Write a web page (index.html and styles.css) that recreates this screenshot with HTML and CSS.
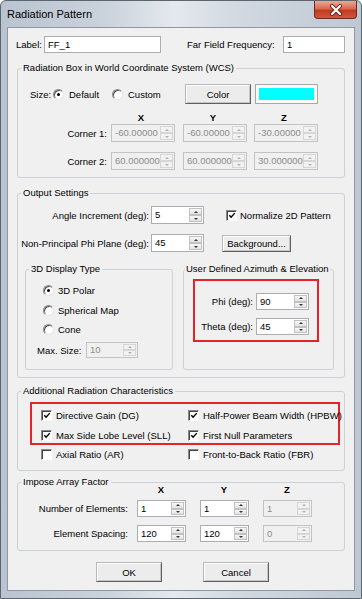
FILE: index.html
```html
<!DOCTYPE html>
<html lang="en">
<head>
    <meta charset="UTF-8">
    <meta name="viewport" content="width=device-width, initial-scale=1.0">
    <title>Radiation Pattern</title>
    <link rel="stylesheet" href="styles.css">
</head>
<body>
    <div class="window">
        <div class="titlebar">
            <span class="title">Radiation Pattern</span>
            <div class="close">
                <svg width="14" height="12" viewBox="0 0 14 12">
                    <path d="M3 2 L11 10 M11 2 L3 10" stroke="#6b2416" stroke-width="4" stroke-linecap="round"/>
                    <path d="M3 2 L11 10 M11 2 L3 10" stroke="#fff" stroke-width="2.2" stroke-linecap="round"/>
                </svg>
            </div>
        </div>
        <div class="client">
            <div class="row-top">
                <span class="lbl-label">Label:</span>
                <div class="edit w-label">FF_1</div>
                <span class="lbl-freq">Far Field Frequency:</span>
                <div class="edit w-freq">1</div>
            </div>

            <fieldset class="group g-box">
                <legend>Radiation Box in World Coordinate System (WCS)</legend>
                <div class="size-row">
                    <span class="size-lbl">Size:</span>
                    <span class="opt w-default"><i class="radio on"></i>Default</span>
                    <span class="opt w-custom"><i class="radio"></i>Custom</span>
                    <button class="btn btn-color">Color</button>
                    <div class="swatch"><div class="swatch-fill"></div></div>
                </div>
                <div class="hdr cols-box">
                    <span></span><span class="h">X</span><span class="h">Y</span><span class="h">Z</span>
                </div>
                <div class="grid cols-box">
                    <span class="rlbl">Corner 1:</span>
                    <div class="spin off w64"><span class="val">-60.00000</span><span class="arrows"><i class="up"></i><i class="down"></i></span></div>
                    <div class="spin off w64"><span class="val">-60.00000</span><span class="arrows"><i class="up"></i><i class="down"></i></span></div>
                    <div class="spin off w64"><span class="val">-30.00000</span><span class="arrows"><i class="up"></i><i class="down"></i></span></div>
                    <span class="rlbl">Corner 2:</span>
                    <div class="spin off w64"><span class="val">60.000000</span><span class="arrows"><i class="up"></i><i class="down"></i></span></div>
                    <div class="spin off w64"><span class="val">60.000000</span><span class="arrows"><i class="up"></i><i class="down"></i></span></div>
                    <div class="spin off w64"><span class="val">30.000000</span><span class="arrows"><i class="up"></i><i class="down"></i></span></div>
                </div>
            </fieldset>

            <fieldset class="group g-out">
                <legend>Output Settings</legend>
                <div class="out-row first">
                    <span class="out-lbl">Angle Increment (deg):</span>
                    <div class="spin w53"><span class="val">5</span><span class="arrows"><i class="up"></i><i class="down"></i></span></div>
                    <span class="opt chk-opt"><i class="check"><svg width="9" height="9" viewBox="0 0 9 9"><path d="M1.5 4.2 L3.5 6.4 L7.6 1.8" fill="none" stroke="#000" stroke-width="1.6"/></svg></i>Normalize 2D Pattern</span>
                </div>
                <div class="out-row">
                    <span class="out-lbl">Non-Principal Phi Plane (deg):</span>
                    <div class="spin w53"><span class="val">45</span><span class="arrows"><i class="up"></i><i class="down"></i></span></div>
                    <button class="btn btn-bg">Background...</button>
                </div>
                <div class="inner-row">
                    <fieldset class="group g-3d">
                        <legend>3D Display Type</legend>
                        <div class="opt r-row r1"><i class="radio on"></i>3D Polar</div>
                        <div class="opt r-row r2"><i class="radio"></i>Spherical Map</div>
                        <div class="opt r-row r3"><i class="radio"></i>Cone</div>
                        <div class="max-row">
                            <span class="max-lbl">Max. Size:</span>
                            <div class="spin off w52 h16"><span class="val">10</span><span class="arrows"><i class="up"></i><i class="down"></i></span></div>
                        </div>
                    </fieldset>
                    <fieldset class="group g-user">
                        <legend>User Defined Azimuth &amp; Elevation</legend>
                        <div class="redbox red-user">
                            <div class="ue-grid">
                                <span class="rlbl">Phi (deg):</span>
                                <div class="spin w53 h17"><span class="val">90</span><span class="arrows"><i class="up"></i><i class="down"></i></span></div>
                                <span class="rlbl">Theta (deg):</span>
                                <div class="spin w53 h17"><span class="val">45</span><span class="arrows"><i class="up"></i><i class="down"></i></span></div>
                            </div>
                        </div>
                    </fieldset>
                </div>
            </fieldset>

            <fieldset class="group g-add">
                <legend>Additional Radiation Characteristics</legend>
                <div class="redbox red-add">
                    <div class="chk-grid">
                        <span class="opt"><i class="check"><svg width="9" height="9" viewBox="0 0 9 9"><path d="M1.5 4.2 L3.5 6.4 L7.6 1.8" fill="none" stroke="#000" stroke-width="1.6"/></svg></i>Directive Gain (DG)</span>
                        <span class="opt"><i class="check"><svg width="9" height="9" viewBox="0 0 9 9"><path d="M1.5 4.2 L3.5 6.4 L7.6 1.8" fill="none" stroke="#000" stroke-width="1.6"/></svg></i>Half-Power Beam Width (HPBW)</span>
                        <span class="opt"><i class="check"><svg width="9" height="9" viewBox="0 0 9 9"><path d="M1.5 4.2 L3.5 6.4 L7.6 1.8" fill="none" stroke="#000" stroke-width="1.6"/></svg></i>Max Side Lobe Level (SLL)</span>
                        <span class="opt"><i class="check"><svg width="9" height="9" viewBox="0 0 9 9"><path d="M1.5 4.2 L3.5 6.4 L7.6 1.8" fill="none" stroke="#000" stroke-width="1.6"/></svg></i>First Null Parameters</span>
                    </div>
                </div>
                <div class="chk-grid plain">
                    <span class="opt"><i class="check"></i>Axial Ratio (AR)</span>
                    <span class="opt"><i class="check"></i>Front-to-Back Ratio (FBR)</span>
                </div>
            </fieldset>

            <fieldset class="group g-imp">
                <legend>Impose Array Factor</legend>
                <div class="hdr cols-imp">
                    <span></span><span class="h">X</span><span class="h">Y</span><span class="h">Z</span>
                </div>
                <div class="grid cols-imp imp-grid">
                    <span class="rlbl">Number of Elements:</span>
                    <div class="spin w49 h17"><span class="val">1</span><span class="arrows"><i class="up"></i><i class="down"></i></span></div>
                    <div class="spin w49 h17"><span class="val">1</span><span class="arrows"><i class="up"></i><i class="down"></i></span></div>
                    <div class="spin off w49 h17"><span class="val">1</span><span class="arrows"><i class="up"></i><i class="down"></i></span></div>
                    <span class="rlbl">Element Spacing:</span>
                    <div class="spin w49 h17"><span class="val">120</span><span class="arrows"><i class="up"></i><i class="down"></i></span></div>
                    <div class="spin w49 h17"><span class="val">120</span><span class="arrows"><i class="up"></i><i class="down"></i></span></div>
                    <div class="spin off w49 h17"><span class="val">0</span><span class="arrows"><i class="up"></i><i class="down"></i></span></div>
                </div>
            </fieldset>

            <div class="btn-row">
                <button class="btn btn-main">OK</button>
                <button class="btn btn-main">Cancel</button>
            </div>
        </div>
    </div>
</body>
</html>
```
FILE: styles.css
```css
* { box-sizing: border-box; }
body {
    margin: 0;
    font-family: "Liberation Sans", Arial, sans-serif;
    font-size: 9.5px;
    color: #000;
    background: #fff;
}
.window {
    width: 362px;
    height: 599px;
    border: 1px solid #5d6670;
    border-radius: 6px 6px 0 0;
    background: linear-gradient(90deg, #b9c4d0 0%, #cbd3dc 30%, #e4e9ee 48%, #d2d9e1 65%, #bec8d3 100%);
    padding: 0 6px 7px;
    display: flex;
    flex-direction: column;
}
.titlebar {
    height: 26px;
    display: flex;
    align-items: flex-start;
}
.title {
    font-size: 11px;
    line-height: 26px;
}
.close {
    margin-left: auto;
    margin-right: -2px;
    width: 43px;
    height: 18px;
    border: 1px solid #6e2a1d;
    border-top: none;
    border-radius: 0 0 4px 4px;
    background: linear-gradient(#e9a996 0%, #d86c52 45%, #c2391f 55%, #d0583c 100%);
    display: flex;
    align-items: center;
    justify-content: center;
}
.client {
    flex: 1;
    border: 1px solid #8c98a5;
    background: #f0f0f0;
    padding: 8px 9px 0 9px;
}

/* top row */
.row-top {
    display: flex;
    align-items: center;
    height: 17px;
    margin-left: -1px;
}
.lbl-label { width: 28px; }
.lbl-freq { width: 96px; margin-left: 26px; }
.edit {
    height: 17px;
    border: 1px solid #abadb3;
    background: #fff;
    padding-left: 3px;
    line-height: 15px;
}
.w-label { width: 117px; }
.w-freq { width: 62px; }

/* group boxes */
.group {
    margin: 0;
    padding: 0;
    border: 1px solid #cdd1d5;
    border-radius: 3px;
    min-width: 0;
}
.group legend {
    margin-left: 3px;
    padding: 0 2px;
    line-height: 12px;
    white-space: nowrap;
}
.g-box { margin-top: 9px; padding-bottom: 7px; }
.g-out { margin-top: 9px; padding-bottom: 7px; }
.g-add { margin-top: 7px; padding-bottom: 8px; }
.g-imp { margin-top: 5px; padding-bottom: 8px; }

.size-row {
    display: flex;
    align-items: center;
    height: 20px;
    margin-top: 10px;
    padding-left: 12px;
}
.size-lbl { width: 23px; }
.w-default { width: 59px; }
.w-custom { width: 73px; }

.opt {
    display: flex;
    align-items: center;
    gap: 5px;
    white-space: nowrap;
}
.radio {
    display: flex;
    align-items: center;
    justify-content: center;
    width: 11px;
    height: 11px;
    flex: none;
    border-radius: 50%;
    border: 1px solid;
    border-color: #8a8a8a #e6e6e6 #e6e6e6 #8a8a8a;
    box-shadow: inset 1px 1px 0 #555;
    background: #fff;
}
.radio.on::after {
    content: "";
    width: 3px;
    height: 3px;
    border-radius: 50%;
    background: #000;
}
.check {
    display: flex;
    align-items: center;
    justify-content: center;
    width: 11px;
    height: 11px;
    flex: none;
    border: 1px solid;
    border-color: #8a8a8a #fff #fff #8a8a8a;
    box-shadow: inset 1px 1px 0 #444;
    background: #fff;
}
.check svg { margin: 1px 0 0 1px; }

.btn {
    font: inherit;
    color: #000;
    padding: 0;
    border: 1px solid;
    border-color: #b8b8b8 #5f5f5f #5f5f5f #b8b8b8;
    box-shadow: inset 1px 1px 0 #fff, inset -1px -1px 0 #c6c6c6;
    background: #ececec;
}
.btn-color { width: 66px; height: 20px; }
.btn-bg { width: 69px; height: 17px; margin-left: 18px; }
.btn-main { width: 66px; height: 20px; }
.swatch {
    width: 63px;
    height: 20px;
    margin-left: 4px;
    border: 1px solid #a8a8a8;
    padding: 3px;
    background: #fafafa;
}
.swatch-fill { height: 100%; background: #00ffff; }

/* coordinate grids */
.cols-box { grid-template-columns: 93px 72px 71px 64px; }
.cols-imp { grid-template-columns: 119px 63px 63px 49px; }
.hdr {
    display: grid;
    height: 12px;
    line-height: 12px;
    font-weight: bold;
    margin-top: 8px;
}
.cols-box .h { width: 60px; text-align: center; }
.cols-imp .h { width: 48px; text-align: center; }
.grid {
    display: grid;
    grid-auto-rows: 18px;
    row-gap: 10px;
    align-items: center;
}
.rlbl { text-align: right; padding-right: 4px; white-space: nowrap; }

.spin {
    display: flex;
    height: 18px;
    flex: none;
    border: 1px solid #abadb3;
    background: #fff;
}
.spin .val {
    flex: 1;
    min-width: 0;
    overflow: hidden;
    white-space: nowrap;
    padding-left: 3px;
    line-height: 16px;
}
.arrows {
    width: 14px;
    display: flex;
    flex-direction: column;
    padding: 1px 1px 1px 0;
}
.arrows i {
    flex: 1;
    display: flex;
    align-items: center;
    justify-content: center;
    border: 1px solid #c2c2c2;
    background: linear-gradient(#f8f8f8, #e2e2e2);
}
.arrows .up::after {
    content: "";
    border: 2px solid transparent;
    border-top: none;
    border-bottom: 2px solid #333;
}
.arrows .down::after {
    content: "";
    border: 2px solid transparent;
    border-bottom: none;
    border-top: 2px solid #333;
}
.spin.off { background: #f0f0f0; border-color: #c3c3c3; color: #8a8a8a; }
.spin.off .arrows i { border-color: #d6d6d6; background: #f2f2f2; }
.spin.off .arrows .up::after { border-bottom-color: #b0b0b0; }
.spin.off .arrows .down::after { border-top-color: #b0b0b0; }
.w64 { width: 64px; }
.w53 { width: 53px; }
.w52 { width: 52px; }
.w49 { width: 49px; }
.h16 { height: 16px; }
.h16 .val { line-height: 14px; }
.h17 { height: 17px; }
.h17 .val { line-height: 15px; }

/* output settings */
.out-row {
    display: flex;
    align-items: center;
    height: 18px;
    margin-top: 10px;
}
.out-row.first { margin-top: 7px; }
.out-lbl {
    width: 133px;
    flex: none;
    text-align: right;
    padding-right: 2px;
    white-space: nowrap;
}
.chk-opt { margin-left: 22px; gap: 3px; }
.inner-row {
    display: flex;
    gap: 10px;
    margin: 11px 0 0 7px;
}
.g-3d { width: 148px; height: 107px; }
.g-user { width: 151px; height: 107px; }
.g-user legend { margin-left: 1px; padding: 0 1px; }
.r-row { height: 16px; padding-left: 17px; gap: 4px; }
.r1 { margin-top: 7px; }
.r2 { margin-top: 4px; }
.r3 { margin-top: 3px; }
.max-row {
    display: flex;
    align-items: center;
    margin-top: 5px;
    padding-left: 11px;
}
.max-lbl { width: 49px; }

.redbox { border: 2px solid #e5232b; }
.red-user {
    width: 126px;
    height: 63px;
    margin: 4px 0 0 9px;
}
.ue-grid {
    display: grid;
    grid-template-columns: 61px 53px;
    grid-auto-rows: 17px;
    row-gap: 8px;
    align-items: center;
    margin-top: 12px;
}
.ue-grid .rlbl { padding-right: 3px; }

/* additional characteristics */
.red-add {
    width: 310px;
    height: 43px;
    margin: 5px 0 0 12px;
    padding: 3px 0 0 9px;
}
.chk-grid {
    display: grid;
    grid-template-columns: 147px auto;
    grid-auto-rows: 16px;
    row-gap: 4px;
}
.chk-grid .opt { gap: 4px; }
.chk-grid.plain { margin: 1px 0 0 23px; }

/* array factor */
.cols-imp.hdr { margin-top: -4px; }
.imp-grid { grid-auto-rows: 17px; row-gap: 8px; margin-top: 4px; }
.imp-grid .rlbl { padding-right: 9px; }

.btn-row {
    display: flex;
    gap: 41px;
    padding-left: 79px;
    margin-top: 11px;
}
```
